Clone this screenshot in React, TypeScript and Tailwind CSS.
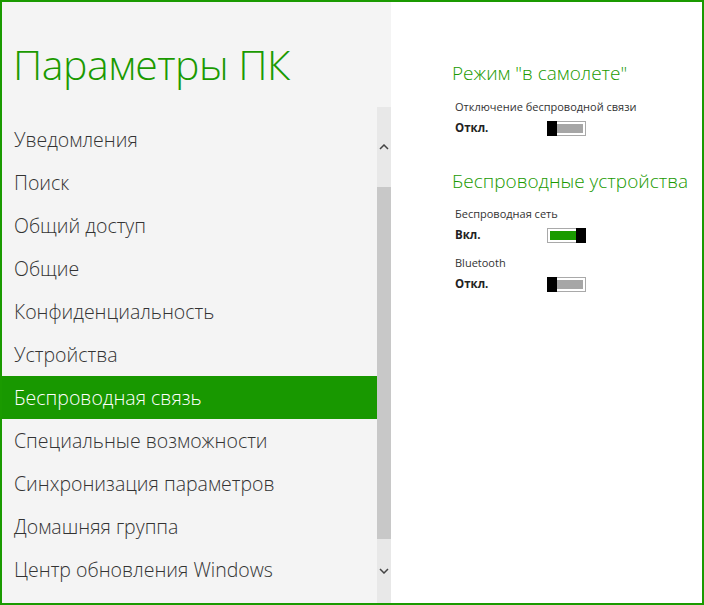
import React from 'react';

const menu = [
  'Уведомления',
  'Поиск',
  'Общий доступ',
  'Общие',
  'Конфиденциальность',
  'Устройства',
  'Беспроводная связь',
  'Специальные возможности',
  'Синхронизация параметров',
  'Домашняя группа',
  'Центр обновления Windows',
];

const Toggle: React.FC<{ on?: boolean }> = ({ on = false }) => (
  <div className="relative w-[39px] h-[15px]">
    <div className="absolute inset-0 border border-[#a9a9a9] bg-white p-[2px]">
      <div className={`w-full h-full ${on ? 'bg-[#1a9a00]' : 'bg-[#a6a6a6]'}`} />
    </div>
    <div className={`absolute top-0 h-[15px] w-[10px] bg-black ${on ? 'right-0' : 'left-0'}`} />
  </div>
);

const Setting: React.FC<{ label: string; state: string; on?: boolean }> = ({ label, state, on }) => (
  <div className="flex flex-col">
    <div className="text-[11px] leading-[16px] text-[#333]">{label}</div>
    <div className="flex items-center h-[26px]">
      <span className="w-[92px] text-[11.5px] font-bold text-[#222]">{state}</span>
      <Toggle on={on} />
    </div>
  </div>
);

export default function App() {
  return (
    <div
      className="w-[704px] h-[605px] border-2 border-[#1a9a00] flex bg-white overflow-hidden"
      style={{ fontFamily: '"Open Sans", "Noto Sans", sans-serif' }}
    >
      <div className="w-[389px] bg-[#f4f4f4] flex">
        <div className="w-[375px] flex flex-col">
          <div className="h-[116px] pl-[11px] pt-[37px]">
            <h1 className="text-[41px] leading-[50px] font-light text-[#1a9a00] tracking-[-0.5px]">Параметры ПК</h1>
          </div>
          {menu.map((m, i) => (
            <div
              key={m}
              className={`h-[43px] flex items-center pl-[12px] text-[19.5px] font-light ${i === 6 ? 'bg-[#189800] text-white' : 'text-[#333]'}`}
            >
              {m}
            </div>
          ))}
        </div>
        <div className="w-[14px] mt-[105px] bg-[#e8e8e8] flex flex-col items-center">
          <div className="h-[80px] flex items-center justify-center text-[#444]">
            <svg width="10" height="6" viewBox="0 0 10 6"><path d="M1 5 L5 1 L9 5" fill="none" stroke="currentColor" strokeWidth="1.5" /></svg>
          </div>
          <div className="w-full h-[352px] bg-[#c8c8c8]" />
          <div className="flex-1 flex items-center justify-center text-[#444]">
            <svg width="10" height="6" viewBox="0 0 10 6"><path d="M1 1 L5 5 L9 1" fill="none" stroke="currentColor" strokeWidth="1.5" /></svg>
          </div>
        </div>
      </div>
      <div className="flex-1 pl-[61px] pt-[57px] flex flex-col">
        <h2 className="text-[19px] leading-[28px] font-light text-[#1a9a00] whitespace-nowrap">Режим "в самолете"</h2>
        <div className="mt-[12px] pl-[3px]">
          <Setting label="Отключение беспроводной связи" state="Откл." />
        </div>
        <h2 className="mt-[26px] text-[19px] leading-[28px] font-light text-[#1a9a00] whitespace-nowrap">Беспроводные устройства</h2>
        <div className="mt-[11px] pl-[3px] flex flex-col gap-[7px]">
          <Setting label="Беспроводная сеть" state="Вкл." on />
          <Setting label="Bluetooth" state="Откл." />
        </div>
      </div>
    </div>
  );
}
